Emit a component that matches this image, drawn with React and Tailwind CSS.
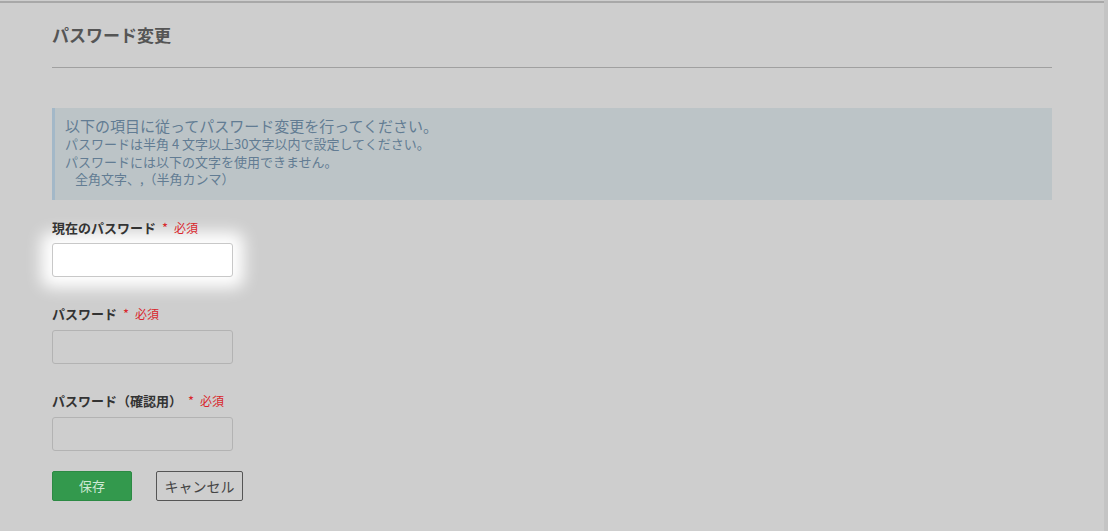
export default function App() {
  const font = { fontFamily: '"Noto Sans CJK JP", "Noto Sans", sans-serif' };
  const Label = ({ children }) => (
    <div className="flex items-center text-[13px] font-bold text-[#333] leading-[18px]">
      <span>{children}</span>
      <span className="ml-[6px] text-[#d9262c] font-normal">*</span>
      <span className="ml-[6px] text-[#d9262c] font-normal text-[12px]">必須</span>
    </div>
  );
  return (
    <div style={font} className="w-[1108px] h-[531px] bg-[#cecece] flex overflow-hidden">
      <div className="w-[1104px] h-full border-t-2 border-[#a8a8a8] mt-px">
        <div className="pl-[52px] w-[1052px]">
          <h1 className="pt-[20px] text-[17px] font-bold text-[#555] leading-[24px]">パスワード変更</h1>
          <div className="mt-[20px] h-px bg-[#a0a0a0]"></div>
          <div className="mt-[40px] h-[92px] bg-[#bcc4c7] border-l-[3px] border-[#a3b8c8] pl-[10px] pt-[8px] text-[#627c93]">
            <div className="text-[15px] leading-[19px]">以下の項目に従ってパスワード変更を行ってください。</div>
            <div className="text-[13px] leading-[17.5px]">パスワードは半角 4 文字以上30文字以内で設定してください。</div>
            <div className="text-[13px] leading-[17.5px]">パスワードには以下の文字を使用できません。</div>
            <div className="text-[13px] leading-[17.5px] pl-[10px]">全角文字、,（半角カンマ）</div>
          </div>
          <div className="mt-[19px]">
            <Label>現在のパスワード</Label>
            <div className="mt-[6px] w-[181px] h-[34px] bg-white border border-[#c8c8c8] rounded-[3px] shadow-[0_0_16px_11px_#ffffff]"></div>
          </div>
          <div className="mt-[28px]">
            <Label>パスワード</Label>
            <div className="mt-[7px] w-[181px] h-[34px] border border-[#b3b3b3] rounded-[3px]"></div>
          </div>
          <div className="mt-[28px]">
            <Label>パスワード（確認用）</Label>
            <div className="mt-[7px] w-[181px] h-[34px] border border-[#b3b3b3] rounded-[3px]"></div>
          </div>
          <div className="mt-[20px] flex gap-[24px]">
            <button className="w-[80px] h-[30px] bg-[#33994d] border border-[#2c8a44] rounded-[2px] text-[13px] text-[#cde8d4]">保存</button>
            <button className="w-[87px] h-[30px] border border-[#555] rounded-[2px] text-[14px] text-[#444]">キャンセル</button>
          </div>
        </div>
      </div>
      <div className="w-[4px] h-full bg-[#c4c4c4]"></div>
    </div>
  );
}
